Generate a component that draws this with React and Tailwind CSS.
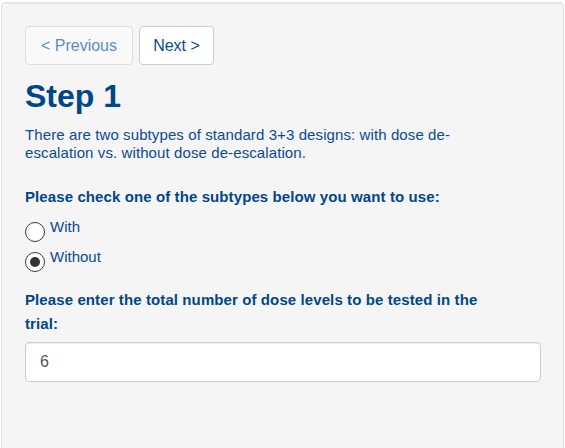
import React from "react";

function Radio({ checked, label }) {
  return (
    <label className="flex items-start h-[30px]">
      <span className="mt-[4px] w-[20px] h-[20px] rounded-full border-[1.5px] border-[#3b3b3b] bg-white flex items-center justify-center shrink-0">
        {checked && <span className="w-[10px] h-[10px] rounded-full bg-[#333]" />}
      </span>
      <span className="ml-[5px] text-[15px] leading-[18px] text-[#0b4a94]">{label}</span>
    </label>
  );
}

export default function App() {
  return (
    <div className="pt-[2px] pl-[1px] pr-[1px] h-[448px] overflow-hidden" style={{ fontFamily: '"Liberation Sans", Arial, sans-serif' }}>
      <div className="w-[563px] h-[460px] bg-[#f5f5f5] border border-[#e3e3e3] rounded-[4px] shadow-[inset_0_1px_1px_rgba(0,0,0,0.05)] pl-[23px] pt-[23px]">
        <div className="flex gap-[6px]">
          <button className="w-[108px] h-[39px] border border-[#dedede] rounded-[4px] bg-[#f9f9f9] text-[16px] text-[#5a8cc6]">
            &lt; Previous
          </button>
          <button className="w-[75px] h-[39px] border border-[#cccccc] rounded-[4px] bg-white text-[16px] text-[#0b4a94]">
            Next &gt;
          </button>
        </div>
        <h1 className="mt-[13px] text-[32px] leading-[36px] font-bold text-[#00468b]">Step 1</h1>
        <p className="mt-[12px] w-[480px] text-[15px] leading-[18px] text-[#0b4a94] tracking-[0.1px]">
          There are two subtypes of standard 3+3 designs: with dose de-escalation vs. without dose de-escalation.
        </p>
        <div className="mt-[26px] text-[15px] leading-[18px] font-bold text-[#00468b] tracking-[0.1px]">
          Please check one of the subtypes below you want to use:
        </div>
        <div className="mt-[12px]">
          <Radio label="With" />
          <Radio label="Without" checked />
        </div>
        <div className="mt-[10px] w-[465px] text-[15px] leading-[24px] font-bold text-[#00468b] tracking-[0.1px]">
          Please enter the total number of dose levels to be tested in the trial:
        </div>
        <div className="mt-[6px] w-[516px] h-[40px] bg-white border border-[#cccccc] rounded-[4px] shadow-[inset_0_1px_1px_rgba(0,0,0,0.075)] pl-[14px] flex items-center text-[16px] text-[#555]">
          6
        </div>
      </div>
    </div>
  );
}
